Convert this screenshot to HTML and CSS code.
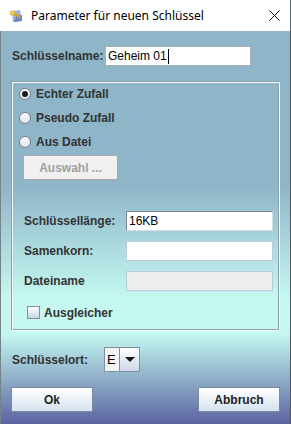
FILE: index.html
```html
<!DOCTYPE html>
<html lang="de">

<head>
    <meta charset="UTF-8">
    <meta name="viewport" content="width=device-width, initial-scale=1.0">
    <title>Parameter für neuen Schlüssel</title>
    <link rel="stylesheet" href="styles.css">
</head>

<body>
    <div class="window">

        <div class="titlebar">
            <svg class="appIcon" width="16" height="16" viewBox="0 0 16 16">
                <path d="M4 3 L12 2 L14 13 L5 14 Z" fill="#9fb4e0" />
                <path d="M8 8 L14 7 L14 13 L6 14 Z" fill="#6c86c8" />
                <circle cx="4.5" cy="5" r="2.6" fill="#e8b830" />
                <circle cx="4.5" cy="5" r="1" fill="#fff3c0" />
                <path d="M6.5 6 L12 9" stroke="#d9a020" stroke-width="2" />
                <path d="M10 8 L9.5 10 M11.5 8.8 L11 10.6" stroke="#d9a020" stroke-width="1.2" />
            </svg>
            <span class="title">Parameter für neuen Schlüssel</span>
            <svg class="closeIcon" width="11" height="11" viewBox="0 0 11 11">
                <path d="M0.5 0.5 L10.5 10.5 M10.5 0.5 L0.5 10.5" stroke="#111" stroke-width="1" />
            </svg>
        </div>

        <div class="content">

            <div class="nameRow">
                <span class="lbl nameLbl">Schlüsselname:</span>
                <div class="field nameField">Geheim 01<span class="caret"></span></div>
            </div>

            <div class="group">
                <div class="radioRow"><span class="radio checked"></span>Echter Zufall</div>
                <div class="radioRow"><span class="radio"></span>Pseudo Zufall</div>
                <div class="radioRow"><span class="radio"></span>Aus Datei</div>
                <div class="btn btnDisabled">Auswahl ...</div>

                <div class="formRow first">
                    <span class="lbl formLbl">Schlüssellänge:</span>
                    <div class="field darkField">16KB</div>
                </div>
                <div class="formRow">
                    <span class="lbl formLbl">Samenkorn:</span>
                    <div class="field lightField"></div>
                </div>
                <div class="formRow">
                    <span class="lbl formLbl">Dateiname</span>
                    <div class="field lightField disabledField"></div>
                </div>

                <div class="checkRow"><span class="checkbox"></span>Ausgleicher</div>
            </div>

            <div class="placeRow">
                <span class="lbl nameLbl">Schlüsselort:</span>
                <div class="combo">
                    <span class="comboValue">E</span>
                    <span class="comboArrow"><span class="arrow"></span></span>
                </div>
            </div>

            <div class="buttons">
                <div class="btn">Ok</div>
                <div class="btn">Abbruch</div>
            </div>

        </div>
    </div>
</body>

</html>
```

FILE: styles.css
```css
body {
    margin: 0;
    font-family: "Liberation Sans", Arial, sans-serif;
}

.window {
    width: 291px;
    height: 424px;
    display: flex;
    flex-direction: column;
    box-sizing: border-box;
}

/* Titelleiste */
.titlebar {
    height: 31px;
    background-color: white;
    display: flex;
    align-items: center;
    border-right: 1px solid #5a6470;
    box-sizing: border-box;
}

.appIcon {
    margin-left: 8px;
    margin-right: 7px;
}

.title {
    font-family: "Noto Sans", sans-serif;
    font-size: 12px;
    color: #000;
    flex: 1;
}

.closeIcon {
    margin-right: 10px;
}

/* Inhalt */
.content {
    flex: 1;
    padding: 15px 10px 0 11px;
    border-left: 1px solid #74828c;
    border-right: 1px solid #4e5864;
    background: linear-gradient(to bottom, #8eb5c8 0%, #8eb5c8 39%, #c4f8f0 68%, #c4f8f0 77%, #5a64a0 100%);
}

.lbl {
    font-weight: bold;
    font-size: 12px;
    color: #333333;
}

.nameRow,
.placeRow {
    display: flex;
    align-items: center;
}

.nameLbl {
    width: 93px;
}

.field {
    height: 20px;
    box-sizing: border-box;
    background-color: white;
    font-size: 12px;
    color: #000;
    display: flex;
    align-items: center;
    padding-left: 2px;
}

.nameField {
    width: 146px;
    border: 1px solid #a6aeb6;
}

.caret {
    width: 1px;
    height: 15px;
    background-color: #000;
    margin-left: 1px;
}

/* Gruppe */
.group {
    margin-top: 16px;
    border: 1px solid #ffffff;
    box-shadow: -1px -1px 0 #8aa0ae, inset -1px -1px 0 #8aa0ae;
    padding-bottom: 11px;
}

.radioRow {
    height: 22px;
    margin-bottom: 2px;
    display: flex;
    align-items: center;
    font-weight: bold;
    font-size: 12px;
    color: #333333;
}

.radio {
    width: 12px;
    height: 12px;
    box-sizing: border-box;
    border-radius: 50%;
    border: 1px solid #72808e;
    background: linear-gradient(to bottom, #ffffff, #dde3ea);
    margin-left: 6px;
    margin-right: 5px;
    display: flex;
    align-items: center;
    justify-content: center;
}

.radio.checked::after {
    content: "";
    width: 6px;
    height: 6px;
    border-radius: 50%;
    background-color: #1c1c1c;
}

.btn {
    width: 82px;
    height: 25px;
    box-sizing: border-box;
    border: 1px solid #7b8aa0;
    background: linear-gradient(to bottom, #ffffff, #d6e2ef);
    font-weight: bold;
    font-size: 12px;
    color: #222;
    display: flex;
    align-items: center;
    justify-content: center;
}

.btnDisabled {
    width: 95px;
    margin-left: 10px;
    border-color: #a8a8a8;
    background: #f0f0f0;
    color: #a0a0a0;
}

.formRow {
    display: flex;
    align-items: center;
    margin-top: 10px;
}

.formRow.first {
    margin-top: 31px;
}

.formLbl {
    width: 102px;
    margin-left: 11px;
}

.formRow .field {
    width: 147px;
}

.darkField {
    border: 1px solid #7c8894;
    border-right-color: #d8dde2;
    border-bottom-color: #d8dde2;
}

.lightField {
    border: 1px solid #bccbdc;
}

.disabledField {
    background-color: #eeeeee;
}

.checkRow {
    margin-top: 15px;
    height: 13px;
    display: flex;
    align-items: center;
    font-weight: bold;
    font-size: 12px;
    color: #333333;
}

.checkbox {
    width: 13px;
    height: 13px;
    box-sizing: border-box;
    border: 1px solid #7f8ea4;
    background: linear-gradient(to bottom, #ffffff, #c9d4e4);
    margin-left: 14px;
    margin-right: 4px;
}

/* Schlüsselort */
.placeRow {
    margin-top: 16px;
}

.combo {
    display: flex;
    height: 25px;
    box-sizing: border-box;
    border: 1px solid #7b90a4;
    margin-left: -1px;
}

.comboValue {
    width: 15px;
    background-color: #f2f2f2;
    border-right: 1px solid #7b90a4;
    font-size: 13px;
    display: flex;
    align-items: center;
    padding-left: 2px;
    box-sizing: border-box;
}

.comboArrow {
    width: 19px;
    background: linear-gradient(to bottom, #ffffff, #cdd8e6);
    display: flex;
    align-items: center;
    justify-content: center;
}

.arrow {
    width: 0;
    height: 0;
    border-left: 5px solid transparent;
    border-right: 5px solid transparent;
    border-top: 5px solid #1a1a1a;
}

.buttons {
    margin: 15px 0 0 -1px;
    display: flex;
    justify-content: space-between;
}
```
